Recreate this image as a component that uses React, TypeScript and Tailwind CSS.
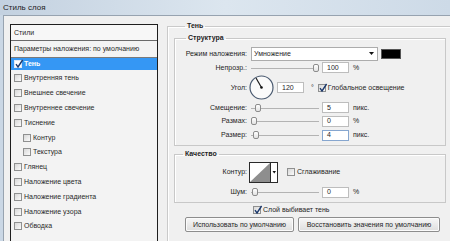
import type { ReactNode } from 'react'

const font = "font-['Liberation_Sans',Arial,sans-serif]"

function Box({ checked, white }: { checked?: boolean; white?: boolean }) {
  return (
    <span
      className={`relative w-[8px] h-[8px] shrink-0 border ${
        white ? 'border-[#dfe9f7] bg-white' : 'border-[#8f9090] bg-gradient-to-br from-[#d8d8d8] to-[#fbfbfb]'
      }`}
    >
      {checked && (
        <svg className="absolute left-[-1px] top-[-2px]" width="10" height="10" viewBox="0 0 10 10">
          <path d="M2 5.2 L4 8 L8.6 1" fill="none" stroke="#1d3a6e" strokeWidth="1.4" />
        </svg>
      )}
    </span>
  )
}

function Slider({ thumb }: { thumb: number }) {
  return (
    <div className="relative w-[68px] h-[10px] shrink-0">
      <div className="absolute left-0 right-0 top-[5px] h-px bg-[#b3b3b3]" />
      <div
        className="absolute top-[1px] w-[6px] h-[8px] rounded-[2px] border border-[#8c8c8c] bg-gradient-to-b from-white to-[#e2e2e2]"
        style={{ left: thumb }}
      />
    </div>
  )
}

function Num({ value, focus }: { value: string; focus?: boolean }) {
  return (
    <div
      className={`w-[27px] h-[11px] shrink-0 bg-white border pl-[4px] flex items-center ${
        focus ? 'border-[#86a6cf]' : 'border-[#bdbdbd]'
      }`}
    >
      {value}
    </div>
  )
}

function Label({ children }: { children: ReactNode }) {
  return <div className="w-[72px] shrink-0 text-right">{children}</div>
}

const layers: { name: string; indent?: boolean }[] = [
  { name: 'Внутренняя тень' },
  { name: 'Внешнее свечение' },
  { name: 'Внутреннее свечение' },
  { name: 'Тиснение' },
  { name: 'Контур', indent: true },
  { name: 'Текстура', indent: true },
  { name: 'Глянец' },
  { name: 'Наложение цвета' },
  { name: 'Наложение градиента' },
  { name: 'Наложение узора' },
  { name: 'Обводка' },
]

export default function App() {
  return (
    <div className={`w-[450px] h-[241px] overflow-hidden flex flex-col bg-[#cad7e5] text-[7px] leading-[10px] text-[#1e1e1e] ${font}`}>
      {/* title bar */}
      <div className="h-[15px] shrink-0 flex items-center pl-[3px] bg-gradient-to-r from-[#c3d1e0] via-[#dce6ef] to-[#cddae7] text-[#222] text-[8px]">
        Стиль слоя
      </div>

      <div className="flex-1 ml-[3px] border-l border-t border-[#97a3b0] bg-[#f0f0f0] flex pt-[8px] pl-[6px]">
        {/* styles list */}
        <div className="w-[148px] h-[240px] shrink-0 border border-[#1e1e1e] bg-[#f3f3f3] flex flex-col text-[#2a2a2a]">
          <div className="h-[16px] shrink-0 border-b border-[#6a6a6a] flex items-center pl-[3px] bg-[#f7f7f7]">Стили</div>
          <div className="h-[17px] shrink-0 border-b border-[#7a7a7a] flex items-center pl-[3px]">
            Параметры наложения: по умолчанию
          </div>
          <div className="h-[12px] shrink-0 bg-[#3597f4] flex items-center pl-[3px] gap-[2px] text-white font-bold">
            <Box checked white />
            Тень
          </div>
          <div className="h-px shrink-0" />
          {layers.map((l) => (
            <div
              key={l.name}
              className={`h-[14.8px] shrink-0 flex items-center gap-[2px] ${l.indent ? 'pl-[12px]' : 'pl-[3px]'}`}
            >
              <Box />
              {l.name}
            </div>
          ))}
        </div>

        {/* right side */}
        <div className="ml-[9px] mt-[-3px]">
          <fieldset className="w-[292px] h-[240px] border border-[#cacaca] shadow-[inset_1px_1px_0_#ffffff] pl-[6px]">
            <legend className="ml-[11px] px-[2px] font-bold">Тень</legend>

            <fieldset className="w-[272px] mt-[2px] border border-[#c8c8c8] shadow-[inset_1px_1px_0_#ffffff] pt-[3px] pb-[3px]">
              <legend className="ml-[11px] px-[2px] font-bold">Структура</legend>

              <div className="h-[15px] flex items-center gap-[4px]">
                <Label>Режим наложения:</Label>
                <div className="w-[127px] h-[14px] bg-white border border-[#acacac] flex items-center justify-between pl-[2px] pr-[3px]">
                  Умножение
                  <svg width="5" height="3" viewBox="0 0 5 3">
                    <path d="M0 0 H5 L2.5 3 Z" fill="#111" />
                  </svg>
                </div>
                <div className="w-[20px] h-[10px] ml-[-1px] bg-black border border-[#555]" />
              </div>

              <div className="h-[13px] flex items-center gap-[3px]">
                <Label>Непрозр.:</Label>
                <div className="ml-[1px]">
                  <Slider thumb={62} />
                </div>
                <Num value="100" />
                <span className="ml-[1px]">%</span>
              </div>

              <div className="h-[27px] flex items-center">
                <Label>Угол:</Label>
                <svg className="ml-[2px]" width="25" height="25" viewBox="0 0 25 25">
                  <circle cx="12.5" cy="12.5" r="11.5" fill="#fafafa" stroke="#4a5a70" strokeWidth="1.2" />
                  <line x1="12.5" y1="12.5" x2="7" y2="3" stroke="#1a1a1a" strokeWidth="1.2" />
                  <circle cx="12.5" cy="12.5" r="1.3" fill="#111" />
                </svg>
                <div className="ml-[3px]">
                  <Num value="120" />
                </div>
                <span className="ml-[7px]">°</span>
                <div className="ml-[4px] flex items-center gap-[2px]">
                  <Box checked />
                  Глобальное освещение
                </div>
              </div>

              <div className="h-[13px] flex items-center gap-[3px]">
                <Label>Смещение:</Label>
                <div className="ml-[1px]">
                  <Slider thumb={4} />
                </div>
                <Num value="5" />
                <span className="ml-[1px]">пикс.</span>
              </div>

              <div className="h-[14px] flex items-center gap-[3px]">
                <Label>Размах:</Label>
                <div className="ml-[1px]">
                  <Slider thumb={0} />
                </div>
                <Num value="0" />
                <span className="ml-[1px]">%</span>
              </div>

              <div className="h-[14px] flex items-center gap-[3px]">
                <Label>Размер:</Label>
                <div className="ml-[1px]">
                  <Slider thumb={2} />
                </div>
                <Num value="4" focus />
                <span className="ml-[1px]">пикс.</span>
              </div>
            </fieldset>

            <fieldset className="w-[272px] mt-[3px] border border-[#c8c8c8] shadow-[inset_1px_1px_0_#ffffff] pt-[2px] pb-[3px]">
              <legend className="ml-[8px] px-[2px] font-bold">Качество</legend>

              <div className="h-[22px] flex items-center">
                <Label>Контур:</Label>
                <svg className="ml-[2px]" width="29" height="21" viewBox="0 0 29 21">
                  <rect x="0.5" y="0.5" width="28" height="20" fill="#fff" stroke="#2a2a2a" />
                  <path d="M1 20 L21 1 L21 20 Z" fill="#8e8e8e" />
                  <line x1="21.5" y1="1" x2="21.5" y2="20" stroke="#2a2a2a" />
                  <path d="M23.5 9 H27 L25.25 11.5 Z" fill="#111" />
                </svg>
                <div className="ml-[9px] flex items-center gap-[2px]">
                  <Box />
                  Сглаживание
                </div>
              </div>

              <div className="h-[14px] mt-[2px] flex items-center gap-[3px]">
                <Label>Шум:</Label>
                <div className="ml-[1px]">
                  <Slider thumb={1} />
                </div>
                <Num value="0" />
                <span className="ml-[1px]">%</span>
              </div>
            </fieldset>

            <div className="h-[12px] mt-[1px] pl-[79px] flex items-center gap-[2px]">
              <Box checked />
              Слой выбивает тень
            </div>

            <div className="mt-[1px] pl-[11px] flex gap-[4px]">
              <button className="w-[109px] h-[15px] rounded-[2px] border border-[#8d8d8d] bg-gradient-to-b from-[#f7f7f7] to-[#dedede] shadow-[inset_0_0_0_1px_#fbfbfb]">
                Использовать по умолчанию
              </button>
              <button className="w-[142px] h-[15px] rounded-[2px] border border-[#8d8d8d] bg-gradient-to-b from-[#f7f7f7] to-[#dedede] shadow-[inset_0_0_0_1px_#fbfbfb]">
                Восстановить значения по умолчанию
              </button>
            </div>
          </fieldset>
        </div>
      </div>
    </div>
  )
}
